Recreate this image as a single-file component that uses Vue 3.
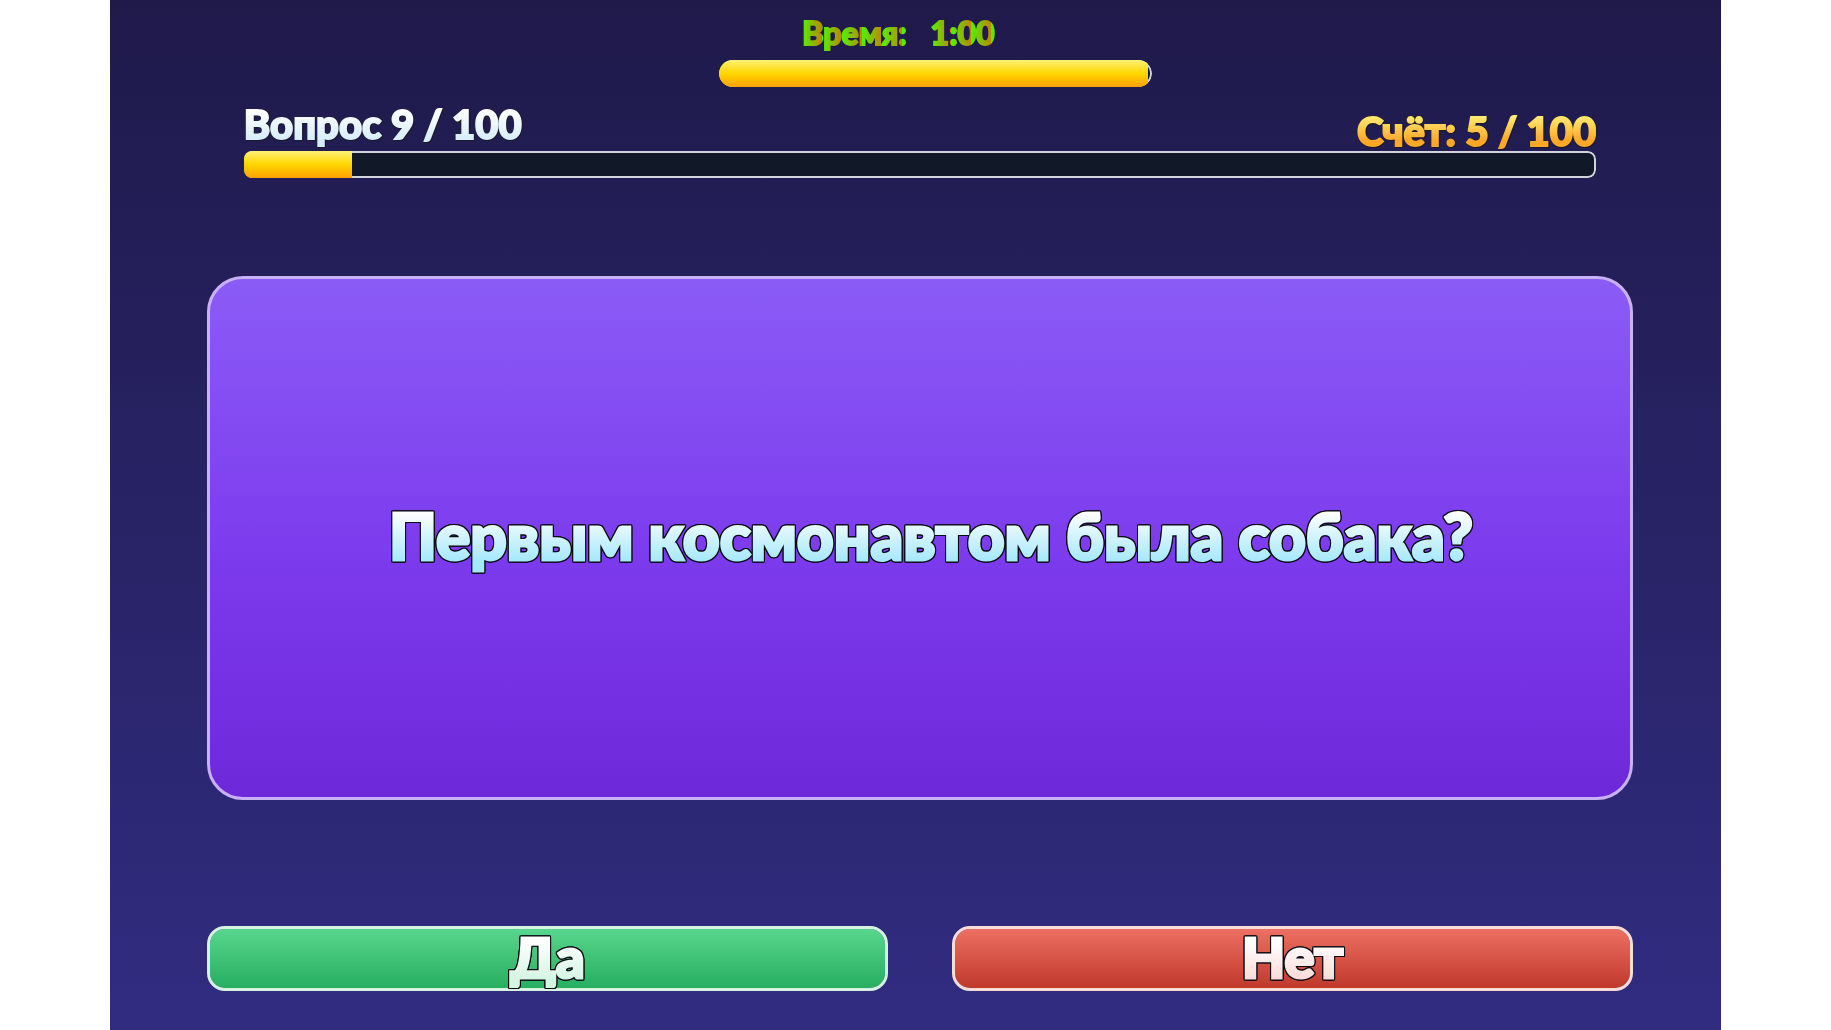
<script setup>
import { computed, ref } from 'vue'

const question = ref(9)
const score = ref(5)
const total = 100
const progress = computed(() => ((question.value - 1) / total) * 100)
const timeLeft = ref(99)
</script>

<template>
  <main class="stage">
    <section class="timer">
      <p class="time">
        <span>Время:</span>
        <span>1:00</span>
      </p>
      <div class="bar bar-round" role="progressbar" aria-label="Время">
        <div class="fill" :style="{ width: timeLeft + '%' }"></div>
      </div>
    </section>

    <header class="hud">
      <div class="labels">
        <p class="label count">Вопрос {{ question }} / {{ total }}</p>
        <p class="label score">Счёт: {{ score }} / {{ total }}</p>
      </div>
      <div class="bar" role="progressbar" aria-label="Вопрос">
        <div class="fill" :style="{ width: progress + '%' }"></div>
      </div>
    </header>

    <section class="card">
      <h1 class="question">Первым космонавтом была собака?</h1>
    </section>

    <div class="answers">
      <button type="button" class="answer yes"><span>Да</span></button>
      <button type="button" class="answer no"><span>Нет</span></button>
    </div>
  </main>
</template>

<style>
body {
  margin: 0;
  background: #fff;
}
</style>

<style scoped>
.stage {
  box-sizing: border-box;
  display: flex;
  flex-direction: column;
  min-height: 100vh;
  margin: 0 6%;
  padding: 16px 88px 39px 97px;
  background: linear-gradient(#1f1a4a, #312c80);
  font-family: "Lato", "Open Sans", sans-serif;
  font-weight: 900;
}

p,
h1 {
  margin: 0;
}

.timer {
  align-self: center;
  width: 433px;
  max-width: 100%;
  margin-left: 31px;
}

.time {
  display: flex;
  justify-content: center;
  gap: 24px;
  height: 44px;
  padding-right: 74px;
  font-size: 32px;
  line-height: 34px;
}

.time span {
  background: linear-gradient(90deg, #4ef500, #c08400) 0 0 / 20px 100%;
  background-clip: text;
  color: transparent;
  -webkit-text-stroke: 2px transparent;
}

.bar {
  box-sizing: border-box;
  height: 27px;
  overflow: hidden;
  border-radius: 8px;
  background: #111827;
  position: relative;
}

.bar::after {
  content: "";
  position: absolute;
  inset: 0;
  border: 2px solid #d1d5db;
  border-radius: inherit;
}

.bar-round {
  border-radius: 14px;
}

.fill {
  position: relative;
  z-index: 1;
  height: 100%;
  background: linear-gradient(#fff176, #ffd600 50%, #ffa000);
}

.hud {
  padding: 12px 37px 0;
}

.labels {
  display: flex;
  justify-content: space-between;
  height: 52px;
}

.label {
  font-size: 40px;
  line-height: 50px;
  color: transparent;
  background-clip: text;
  -webkit-text-stroke: 2px transparent;
  filter: drop-shadow(1px 0 0 #1a1a2a) drop-shadow(0 1px 0 #1a1a2a);
}

.count {
  background-image: linear-gradient(#fff 20%, #d6ecfb 80%);
}

.score {
  padding-top: 7px;
  background-image: linear-gradient(#fff176 30%, #ffa726 80%);
}

.card {
  box-sizing: border-box;
  display: flex;
  flex: 1;
  align-items: center;
  justify-content: center;
  margin: 98px 0 126px;
  padding: 32px 32px 36px 54px;
  border: 3px solid #c9b1f5;
  border-radius: 36px;
  background: linear-gradient(#8b5cf6, #7c3aed 55%, #6d28d9) border-box;
}

.question,
.answer span {
  color: transparent;
  background-clip: text;
  -webkit-text-stroke: 3px transparent;
  filter: drop-shadow(1px 0 0 #0b0b14) drop-shadow(-1px 0 0 #0b0b14)
    drop-shadow(0 1px 0 #0b0b14) drop-shadow(0 -1px 0 #0b0b14);
}

.question {
  font-size: 64px;
  line-height: 80px;
  font-weight: 900;
  text-align: center;
  background-image: linear-gradient(#fff 20%, #a5e8fc 82%);
}

.answers {
  display: grid;
  grid-template-columns: 1fr 1fr;
  gap: 64px;
}

.answer {
  box-sizing: border-box;
  height: 65px;
  padding: 0;
  border: 3px solid;
  border-radius: 18px;
  font: inherit;
  font-size: 56px;
  line-height: 56px;
  cursor: pointer;
}

.answer span {
  display: block;
  height: 59px;
}

.yes {
  border-color: #d6f2e1;
  background: linear-gradient(#58d68d, #27ae60) padding-box;
}

.yes span {
  background-image: linear-gradient(#fff 20%, #d5f5e3 85%);
}

.no {
  border-color: #f8dcd8;
  background: linear-gradient(#ec7063, #c0392b) padding-box;
}

.no span {
  background-image: linear-gradient(#fff 20%, #fadbd8 85%);
}
</style>
